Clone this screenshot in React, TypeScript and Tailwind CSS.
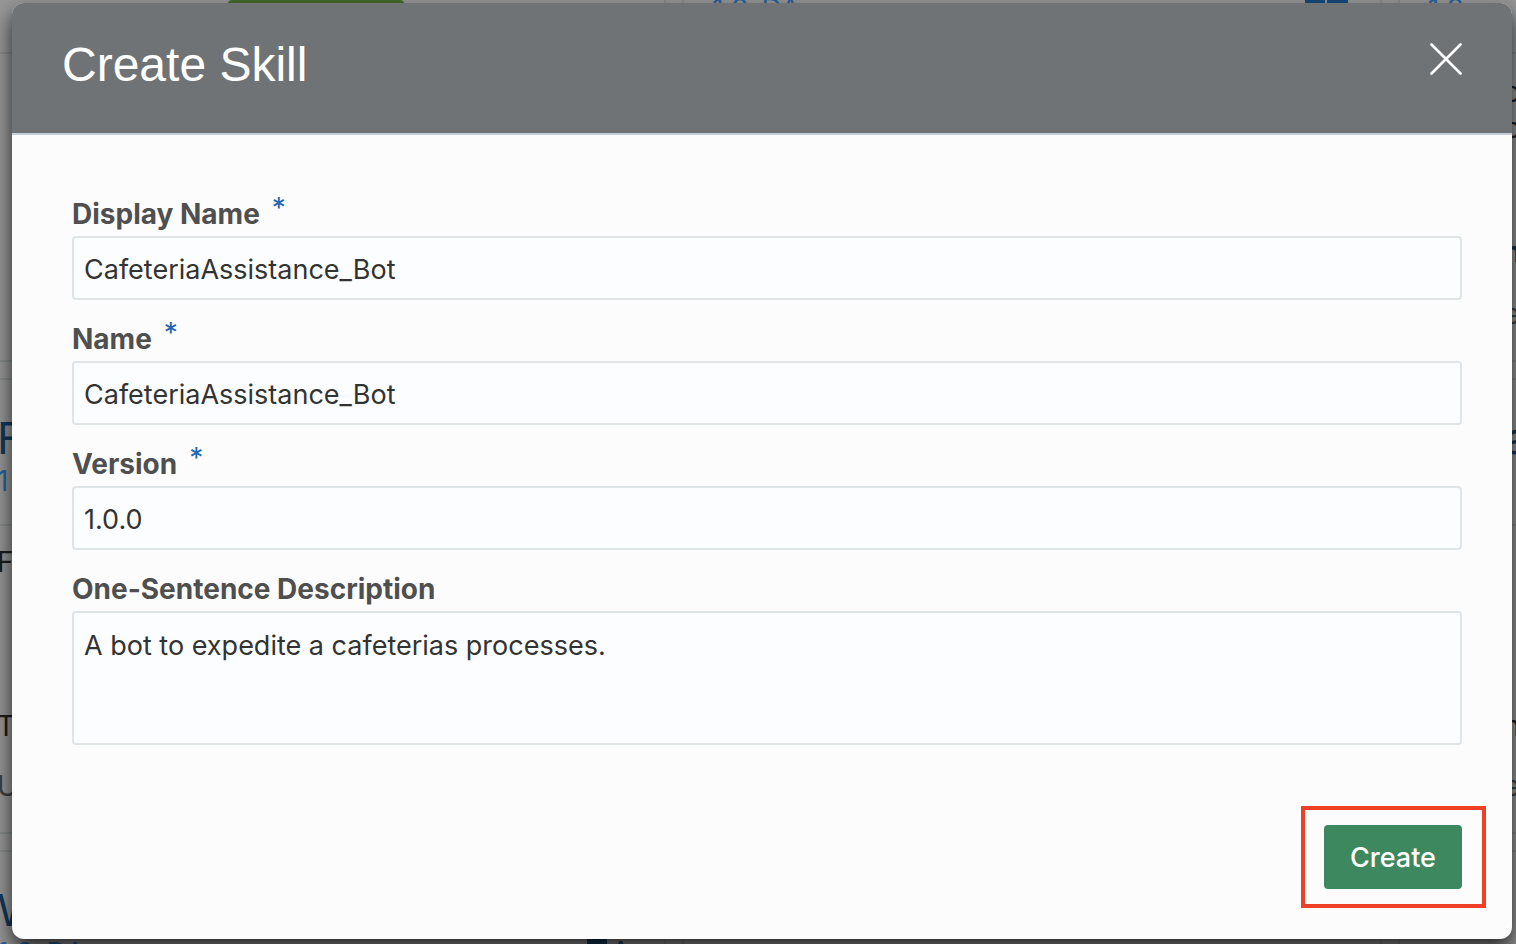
import React, { useState } from "react";

type CardProps = {
  title?: string;
  version?: string;
  summary?: string[];
  footer?: [string, string];
  inset?: string;
  children?: React.ReactNode;
};

function SkillCard({ title, version, summary = [], footer, inset = "px-7", children }: CardProps) {
  return (
    <div className={`relative flex h-[456px] flex-col border-2 border-[#858b8c] ${inset}`}>
      <div className="h-[144px] pt-8">
        <div className="h-[51px] text-[44px] leading-[52px] text-[#12395c]">{title}</div>
        <div className="h-9 text-[28px] leading-9 text-[#2a62a0]">{version}</div>
      </div>
      <div className="absolute inset-x-0 top-[144px] border-t-2 border-[#858b8c]" />
      <div className="h-[164px] pt-5 text-[28px] leading-9 text-[#1c1c1c]">
        {summary.map((line, index) => (
          <div key={index}>{line}</div>
        ))}
      </div>
      {footer && (
        <div className="pt-5 text-[28px]">
          <div className="h-[60px] leading-9 text-[#1c1c1c]">{footer[0]}</div>
          <div className="leading-9 text-[#404040]">{footer[1]}</div>
        </div>
      )}
      {children}
    </div>
  );
}

function SkillsPage() {
  return (
    <div aria-hidden="true" className="absolute inset-0 overflow-hidden bg-[#969696]">
      <div className="-mt-[94px] -mr-[581px] -ml-[33px] grid grid-cols-3 gap-x-4 gap-y-4">
        <SkillCard>
          <div className="absolute top-[92px] left-[259px] h-16 w-[176px] rounded bg-[#446a2b]" />
        </SkillCard>
        <SkillCard version="1.0-DA">
          <div className="absolute top-[54px] right-8 flex gap-0.5">
            <div className="h-[41px] w-5 bg-[#174a7a]" />
            <div className="h-[41px] w-[21px] bg-[#174a7a]" />
          </div>
        </SkillCard>
        <SkillCard version="1.0">
          <div className="absolute top-[166px] left-[104px] text-[28px] leading-9 text-[#1c1c1c]">
            <div>o</div>
            <div>p</div>
            <div className="pt-[88px] font-bold text-[#16344f]">n</div>
            <div className="pt-[26px] text-[#404040]">e</div>
          </div>
        </SkillCard>
        <SkillCard title="F" version="1" summary={["F"]} footer={["T", "U"]} />
        <SkillCard />
        <SkillCard title="a" summary={["i"]} footer={["n", "e"]} inset="pl-[104px]" />
        <SkillCard title="W" version="1.0-DA">
          <div className="absolute top-[54px] right-[34px] flex gap-1 text-[#174a7a]">
            <div className="h-11 w-5 bg-[#12395c]" />
            <div className="pt-7 text-[28px] leading-9">A</div>
          </div>
        </SkillCard>
        <SkillCard />
        <SkillCard />
      </div>
    </div>
  );
}

const fieldBox =
  "block w-full resize-none rounded-[4px] border-2 border-[#dfe4e7] bg-[#fcfdfe] px-[10px] text-[27px] leading-9 text-[#333333] outline-none";

function FieldLabel({ id, text, required }: { id: string; text: string; required?: boolean }) {
  return (
    <label htmlFor={id} className="mb-1 flex h-9 text-[28px] leading-9 font-bold text-[#4f4f4f]">
      {text}
      {required && <span className="ml-3 leading-6 font-normal text-[#1f66b3]">*</span>}
    </label>
  );
}

function TextField({ id, label, initial }: { id: string; label: string; initial: string }) {
  const [value, setValue] = useState(initial);
  return (
    <div>
      <FieldLabel id={id} text={label} required />
      <input
        id={id}
        type="text"
        required
        value={value}
        onChange={(event) => setValue(event.target.value)}
        className={`h-16 pt-0.5 ${fieldBox}`}
      />
    </div>
  );
}

export default function App() {
  const [description, setDescription] = useState("A bot to expedite a cafeterias processes.");

  return (
    <div className="relative min-h-screen overflow-hidden pt-[3px] pr-1 pb-[5px] pl-3 font-['Inter','Liberation_Sans',sans-serif]">
      <SkillsPage />
      <div
        role="dialog"
        aria-labelledby="dialog-title"
        className="relative rounded-xl bg-[#fcfcfc] shadow-[0_10px_20px_rgba(0,0,0,0.75)]"
      >
        <header className="flex h-[132px] items-start justify-between rounded-t-xl border-b-2 border-[#c4ced7] bg-[#6f7376] px-[50px]">
          <h1
            id="dialog-title"
            className="pt-8 font-['Liberation_Sans',sans-serif] text-5xl leading-[60px] text-white"
          >
            Create Skill
          </h1>
          <button type="button" aria-label="Close" className="mt-10 text-white">
            <svg width="32" height="32" viewBox="0 0 32 32" fill="none" stroke="currentColor" strokeWidth="2.6" strokeLinecap="round">
              <path d="M1.5 1.5 30.5 30.5M30.5 1.5 1.5 30.5" />
            </svg>
          </button>
        </header>
        <form onSubmit={(event) => event.preventDefault()} className="pt-[61px] pr-[50px] pb-[50px] pl-[60px]">
          <div className="flex flex-col gap-[21px]">
            <TextField id="display-name" label="Display Name" initial="CafeteriaAssistance_Bot" />
            <TextField id="name" label="Name" initial="CafeteriaAssistance_Bot" />
            <TextField id="version" label="Version" initial="1.0.0" />
            <div>
              <FieldLabel id="description" text="One-Sentence Description" />
              <textarea
                id="description"
                value={description}
                onChange={(event) => setDescription(event.target.value)}
                className={`h-[134px] pt-[15px] pb-3 ${fieldBox}`}
              />
            </div>
          </div>
          <div className="mt-20 flex justify-end">
            <div className="relative">
              <button type="submit" className="h-16 w-[138px] rounded-[4px] bg-[#3e8860] pt-0.5 text-[27px] font-medium text-white">
                Create
              </button>
              <div className="pointer-events-none absolute -inset-y-[19px] -right-6 -left-[23px] border-4 border-[#ed4026]" />
            </div>
          </div>
        </form>
      </div>
    </div>
  );
}
